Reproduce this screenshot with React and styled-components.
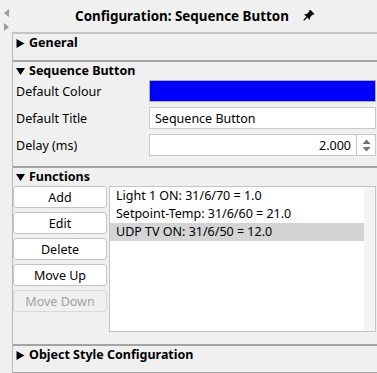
import React from "react";
import styled, { createGlobalStyle } from "styled-components";

const Global = createGlobalStyle`
  html, body { margin: 0; padding: 0; background: #f0f0f0; }
  body {
    font-family: "Noto Sans", "Open Sans", sans-serif;
    font-size: 12.5px;
    color: #000;
  }
  * { box-sizing: border-box; }
`;

const Screen = styled.div`
  display: flex;
  width: 377px;
  height: 373px;
  overflow: hidden;
  background: #f0f0f0;
`;

const SideStrip = styled.div`
  width: 12px;
  flex-shrink: 0;
  display: flex;
  flex-direction: column;
  align-items: center;
  padding-top: 9px;
  gap: 6px;
`;

const Column = styled.div`
  flex: 1;
  display: flex;
  flex-direction: column;
  min-width: 0;
`;

const TitleBar = styled.header`
  height: 34px;
  flex-shrink: 0;
  display: flex;
  align-items: center;
  justify-content: center;
  gap: 13px;
  padding-bottom: 1px;
  border-bottom: 2px solid #c4c4c4;
  font-weight: 700;
  font-size: 13.4px;
`;

const Panel = styled.div`
  flex: 1;
  border-left: 1px solid #b8b8b8;
  display: flex;
  flex-direction: column;
`;

const Section = styled.section`
  height: ${(p) => p.$h}px;
  flex-shrink: 0;
  border-bottom: 2px solid #a4a4a4;
  padding-right: 1px;
`;

const SectionHead = styled.div`
  height: 18px;
  line-height: 18px;
  display: flex;
  align-items: center;
  gap: 4px;
  padding-left: 3px;
  font-weight: 700;
`;

const Rows = styled.div`
  display: flex;
  flex-direction: column;
  gap: 5px;
`;

const Row = styled.div`
  display: flex;
  align-items: center;
  height: 22px;
`;

const Label = styled.div`
  width: 136px;
  padding-left: 3px;
  flex-shrink: 0;
`;

const ColourBox = styled.div`
  flex: 1;
  height: 22px;
  background: ${(p) => p.$colour};
  border: 1px solid #b0b0b0;
`;

const TextField = styled.div`
  flex: 1;
  height: 22px;
  background: #fff;
  border: 1px solid #c8c8c8;
  display: flex;
  align-items: center;
  padding-left: 5px;
`;

const SpinValue = styled.div`
  flex: 1;
  text-align: right;
  padding-right: 5px;
`;

const SpinArrows = styled.div`
  width: 19px;
  height: 100%;
  border-left: 1px solid #c8c8c8;
  display: flex;
  align-items: center;
  justify-content: center;
`;

const FuncBody = styled.div`
  display: flex;
  gap: 2px;
`;

const ButtonCol = styled.div`
  width: 94px;
  display: flex;
  flex-direction: column;
  gap: 4px;
`;

const Button = styled.div`
  height: 22px;
  display: flex;
  align-items: center;
  justify-content: center;
  background: ${(p) => (p.$disabled ? "#f0f0f0" : "#fff")};
  color: ${(p) => (p.$disabled ? "#a0a0a0" : "#000")};
  border: 1px solid ${(p) => (p.$disabled ? "#d8d8d8" : "#c4c4c4")};
  border-radius: 3px;
`;

const List = styled.div`
  flex: 1;
  height: 146px;
  background: #fff;
  border: 1px solid #c4c4c4;
  display: flex;
`;

const ListItems = styled.div`
  flex: 1;
`;

const ListItem = styled.div`
  height: 18px;
  line-height: 18px;
  padding-left: 6px;
  background: ${(p) => (p.$selected ? "#d4d4d4" : "transparent")};
  white-space: nowrap;
`;

const ScrollTrack = styled.div`
  width: 11px;
  background: #f4f4f4;
`;

const Tri = ({ down }) => (
  <svg width="9" height="9" viewBox="0 0 9 9">
    {down ? <path d="M0 1 L9 1 L4.5 8 Z" fill="#000" /> : <path d="M0.5 0 L8.5 4.5 L0.5 9 Z" fill="#000" />}
  </svg>
);

const SideArrow = ({ left }) => (
  <svg width="5" height="8" viewBox="0 0 5 8">
    {left ? <path d="M5 0 L0 4 L5 8 Z" fill="#9a9a9a" /> : <path d="M0 0 L5 4 L0 8 Z" fill="#9a9a9a" />}
  </svg>
);

const Pin = () => (
  <svg width="12" height="12" viewBox="0 0 11 11">
    <g transform="rotate(45 5.5 5.5)">
      <rect x="2.8" y="0" width="5.4" height="1.8" fill="#000" />
      <path d="M3.6 1.6 L7.4 1.6 L7.8 5.4 L9.3 7 L1.7 7 L3.2 5.4 Z" fill="#000" />
      <rect x="4.9" y="7" width="1.2" height="4" fill="#000" />
    </g>
  </svg>
);

const functions = [
  "Light 1 ON: 31/6/70 = 1.0",
  "Setpoint-Temp: 31/6/60 = 21.0",
  "UDP TV ON: 31/6/50 = 12.0",
];

export default function App() {
  return (
    <Screen>
      <Global />
      <SideStrip>
        <SideArrow left />
        <SideArrow />
      </SideStrip>
      <Column>
        <TitleBar>
          <span>Configuration: Sequence Button</span>
          <Pin />
        </TitleBar>
        <Panel>
          <Section $h={28}>
            <SectionHead>
              <Tri /> General
            </SectionHead>
          </Section>

          <Section $h={106}>
            <SectionHead>
              <Tri down /> Sequence Button
            </SectionHead>
            <Rows>
              <Row>
                <Label>Default Colour</Label>
                <ColourBox $colour="#0000ff" />
              </Row>
              <Row>
                <Label>Default Title</Label>
                <TextField>Sequence Button</TextField>
              </Row>
              <Row>
                <Label>Delay (ms)</Label>
                <TextField>
                  <SpinValue>2.000</SpinValue>
                  <SpinArrows>
                    <svg width="9" height="13" viewBox="0 0 9 13">
                      <path d="M4.5 0.5 L8.5 5 L0.5 5 Z" fill="#707070" />
                      <path d="M0.5 8 L8.5 8 L4.5 12.5 Z" fill="#707070" />
                    </svg>
                  </SpinArrows>
                </TextField>
              </Row>
            </Rows>
          </Section>

          <Section $h={178}>
            <SectionHead>
              <Tri down /> Functions
            </SectionHead>
            <FuncBody>
              <ButtonCol>
                <Button>Add</Button>
                <Button>Edit</Button>
                <Button>Delete</Button>
                <Button>Move Up</Button>
                <Button $disabled>Move Down</Button>
              </ButtonCol>
              <List>
                <ListItems>
                  {functions.map((f, i) => (
                    <ListItem key={f} $selected={i === 2}>
                      {f}
                    </ListItem>
                  ))}
                </ListItems>
                <ScrollTrack />
              </List>
            </FuncBody>
          </Section>

          <Section $h={28}>
            <SectionHead>
              <Tri /> Object Style Configuration
            </SectionHead>
          </Section>
        </Panel>
      </Column>
    </Screen>
  );
}
